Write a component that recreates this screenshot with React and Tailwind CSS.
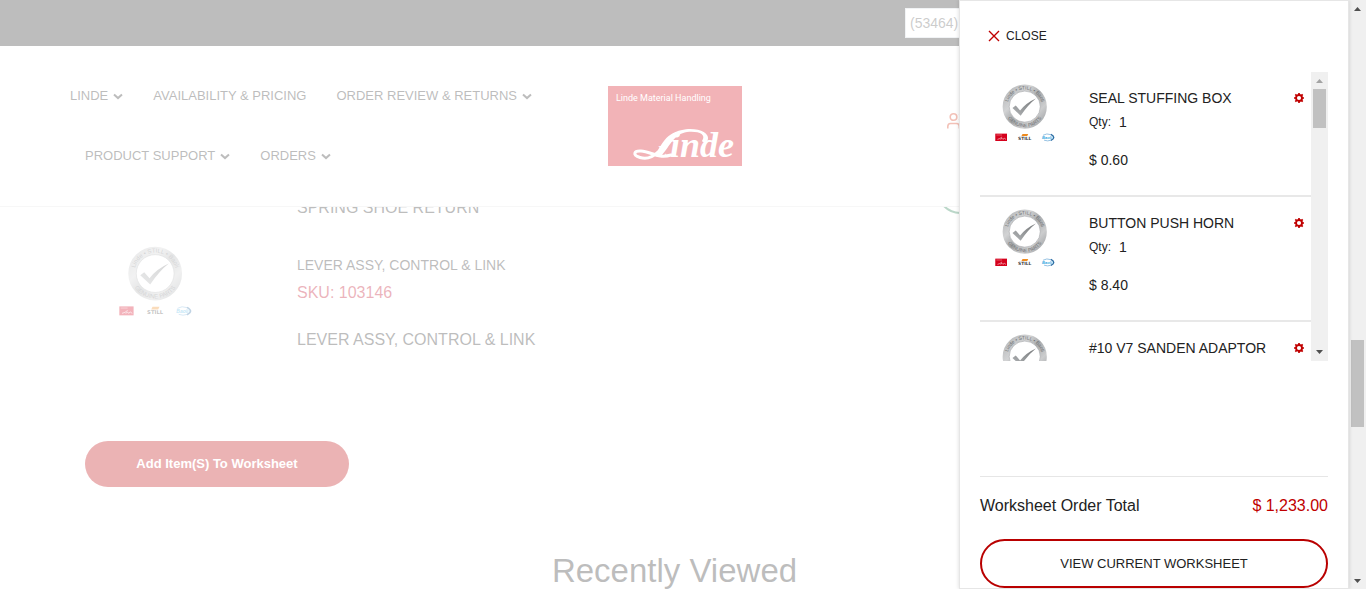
import React from 'react';

function Chevron() {
  return (
    <svg className="h-2 w-2.5" viewBox="0 0 10 8" fill="none" stroke="currentColor" strokeWidth="2" aria-hidden="true">
      <path d="M1 2.500 L5 6.100 L9 2.500" />
    </svg>
  );
}

function GenuineBadge({ id, className }) {
  return (
    <svg className={className} viewBox="56 34 220 212" role="img" aria-label="Genuine parts">
      <defs>
        <linearGradient id={`${id}-ring`} x1="0" y1="0" x2="1" y2="1">
          <stop offset="0" stopColor="#b4b6b8" />
          <stop offset="0.3" stopColor="#d2d3d4" />
          <stop offset="0.5" stopColor="#a9abad" />
          <stop offset="0.75" stopColor="#cccdce" />
          <stop offset="1" stopColor="#a0a2a5" />
        </linearGradient>
        <linearGradient id={`${id}-tick`} x1="0" y1="1" x2="1" y2="0">
          <stop offset="0" stopColor="#b0b3b5" />
          <stop offset="1" stopColor="#77797b" />
        </linearGradient>
        <path id={`${id}-top`} d="M102 117 A63 63 0 0 1 228 117" />
        <path id={`${id}-bottom`} d="M90 117 A75 75 0 0 0 240 117" />
      </defs>
      <circle cx="165" cy="117" r="69" fill="none" stroke={`url(#${id}-ring)`} strokeWidth="24" />
      <circle cx="165" cy="117" r="57" fill="none" stroke="#9a9c9e" strokeWidth="2" />
      <g fill="#6f7173" fontFamily="Liberation Sans, sans-serif" fontSize="18" textAnchor="middle">
        <text><textPath href={`#${id}-top`} startOffset="50%">Linde • STILL • Baoli</textPath></text>
        <text><textPath href={`#${id}-bottom`} startOffset="50%">GENUINE PARTS</textPath></text>
      </g>
      <path d="M120 122 L132 113 L148 131 Q170 103 206 87 Q178 109 150 150 Z" fill={`url(#${id}-tick)`} />
      <rect x="57" y="216" width="43" height="27" fill="#d5001c" />
      <path d="M61 221 H82" stroke="#f3a0a8" strokeWidth="2" />
      <path d="M65 237 L74 234 L82 228 M76 237 L82 233 L85 237 L90 233 L96 237" fill="none" stroke="#fff" strokeWidth="2" />
      <path d="M157 217 H178 L174 225 H153 Z" fill="#ef8a1d" />
      <text x="165" y="238" fill="#3c3c3c" fontFamily="DejaVu Sans, sans-serif" fontSize="16" fontWeight="700" textAnchor="middle">STILL</text>
      <path d="M232 222 A22 12 0 0 1 262 220 M236 240 A22 12 0 0 0 262 240" fill="none" stroke="#7fb4dc" strokeWidth="3" />
      <path d="M261 219 Q282 230 261 241" fill="none" stroke="#2e6da4" strokeWidth="5" />
      <text x="247" y="236" fill="#36a9e1" fontFamily="Liberation Sans, sans-serif" fontSize="15" fontStyle="italic" fontWeight="700" textAnchor="middle">Baoli</text>
    </svg>
  );
}

function Logo() {
  return (
    <svg className="h-20 w-[134px]" viewBox="0 0 134 80" role="img" aria-label="Linde Material Handling">
      <rect width="134" height="80" fill="#d4000f" />
      <text x="8" y="15" fill="#fff" fontFamily="Roboto, sans-serif" fontSize="9">Linde Material Handling</text>
      <text y="71" fill="#fff" fontFamily="Liberation Serif, serif" fontStyle="italic" fontWeight="700">
        <tspan x="49" fontSize="16">L</tspan>
        <tspan x="62" fontSize="36">inde</tspan>
      </text>
      <path d="M46 70 C54 60 56 46 78 43.200 C92 42 101 47 100 53 C99 57 95 57 94 55 C99 48 90 44.800 79 46 C66 48 62 60 54 69 Z" fill="#fff" />
      <path d="M50 66 C44 72 37 73 32 71.500 C24 69 26 64.500 33 65 C43 65.500 50 73 63 69" fill="none" stroke="#fff" strokeWidth="3" strokeLinecap="round" />
    </svg>
  );
}

function Gear() {
  return (
    <svg className="size-2.5" viewBox="0 0 10 10" fill="none" stroke="#c00000" aria-hidden="true">
      <path d="M5 0 V2 M5 8 V10 M0 5 H2 M8 5 H10 M1.3 1.3 L2.8 2.8 M7.2 7.2 L8.7 8.7 M8.7 1.3 L7.2 2.8 M2.8 7.2 L1.3 8.7" strokeWidth="1.7" />
      <circle cx="5" cy="5" r="3" strokeWidth="1.900" />
    </svg>
  );
}

function Arrow({ up, className }) {
  return (
    <svg className={className} viewBox="0 0 7 4" fill="currentColor" aria-hidden="true">
      <path d={up ? 'M0 4 L3.5 0 L7 4 Z' : 'M0 0 L3.5 4 L7 0 Z'} />
    </svg>
  );
}

const nav = [
  { label: 'LINDE', menu: true },
  { label: 'AVAILABILITY & PRICING' },
  { label: 'ORDER REVIEW & RETURNS', menu: true },
  { label: 'PRODUCT SUPPORT', menu: true },
  { label: 'ORDERS', menu: true },
];

const items = [
  { name: 'SEAL STUFFING BOX', price: '$ 0.60' },
  { name: 'BUTTON PUSH HORN', price: '$ 8.40' },
  { name: '#10 V7 SANDEN ADAPTOR' },
];

function Page() {
  return (
    <div className="relative min-w-0 flex-1 overflow-hidden bg-white">
      <div className="flex h-[46px] items-center justify-end bg-[#222]">
        <input
          aria-label="Account"
          defaultValue="(53464)"
          className="mr-[124px] h-[30px] w-80 border border-gray-300 bg-white px-1 text-sm text-[#555]"
        />
      </div>

      <header className="relative z-10 grid h-[161px] grid-cols-[1fr_134px_1fr] items-center border-b border-[#e5e5e5] bg-white">
        <nav className="flex flex-wrap pb-px pl-[70px]">
          {nav.map((n, i) => (
            <a
              key={n.label}
              href="#"
              className={`flex h-[60px] items-center gap-[5px] pr-[15px] text-[13px] ${i === 0 ? '' : 'pl-[15px]'}`}
            >
              {n.label}
              {n.menu && <Chevron />}
            </a>
          ))}
        </nav>
        <a href="#"><Logo /></a>
        <div className="flex justify-center pr-44 pb-2.5">
          <a href="#" aria-label="Account" className="text-[#d5300f]">
            <svg className="size-5" viewBox="0 0 20 20" fill="none" stroke="currentColor" strokeWidth="1.6">
              <circle cx="6.500" cy="6" r="3.300" />
              <path d="M0.800 17.500 V15.500 Q0.800 12.500 3.500 12.500 H9.500 Q12.300 12.500 12.300 15.500 V17.500 M12 3 Q14.500 4 14.500 6 T12 9.300 M15 12.500 Q18 13.500 18 17.500" />
            </svg>
          </a>
        </div>
      </header>

      <main className="-mt-[11px] px-[85px]">
        <div className="relative flex h-6 items-center pl-[212px]">
          <p className="leading-6">SPRING SHOE RETURN</p>
          <svg className="absolute -top-7 right-[281px] size-[46px]" viewBox="0 0 46 46" fill="none" stroke="#1c7a4b" strokeWidth="2" aria-hidden="true">
            <circle cx="23" cy="23" r="22" />
          </svg>
        </div>
        <article className="mt-[26px] flex">
          <div className="w-[212px] shrink-0 pl-[34px]">
            <GenuineBadge id="page" className="w-[73px]" />
          </div>
          <div className="pt-[7px]">
            <a href="#" className="block text-sm leading-6">LEVER ASSY, CONTROL &amp; LINK</a>
            <p className="mt-1 leading-6 text-[#bd0020]">SKU: 103146</p>
            <p className="mt-[23px] leading-6">LEVER ASSY, CONTROL &amp; LINK</p>
          </div>
        </article>
        <button type="button" className="mt-[89px] flex h-[46px] w-[264px] items-center justify-center rounded-full bg-[#bd0005] text-[13px] font-bold text-white">
          Add Item(S) To Worksheet
        </button>
        <h2 className="mt-[68px] text-center text-[33px] leading-8">Recently Viewed</h2>
      </main>

      <div className="absolute inset-0 z-20 bg-white/70" />
    </div>
  );
}

function WorksheetDrawer() {
  return (
    <aside className="absolute inset-y-0 right-[17px] z-30 flex w-[390px] flex-col border border-[#e6e6e6] bg-white px-5 text-[#222] shadow-[0_0_4px_rgba(0,0,0,0.15)]">
      <button type="button" className="mt-[27px] ml-2 flex h-4 w-fit items-center gap-1.5 text-xs">
        <svg className="size-3" viewBox="0 0 12 12" stroke="#c00000" strokeWidth="1.4" aria-hidden="true">
          <path d="M1 1 L11 11 M11 1 L1 11" />
        </svg>
        CLOSE
      </button>

      <div className="mt-7 flex h-[49vh] shrink-0">
        <ul className="min-w-0 flex-1 overflow-hidden">
          {items.map((item, i) => (
            <li key={item.name} className="flex h-[125px] border-b-2 border-[#e8e8e8] pt-3">
              <div className="w-[109px] shrink-0 pl-[15px]">
                <GenuineBadge id={`item-${i}`} className="w-[60px]" />
              </div>
              <div className="min-w-0 flex-1 pt-1">
                <h3 className="text-sm leading-5">{item.name}</h3>
                {item.price && (
                  <>
                    <p className="mt-1 flex items-center gap-2 leading-5">
                      <span className="text-xs">Qty:</span>
                      <span className="text-sm leading-5">1</span>
                    </p>
                    <p className="mt-[18px] text-sm leading-5">{item.price}</p>
                  </>
                )}
              </div>
              <button type="button" aria-label={`Options for ${item.name}`} className="mt-[9px] mr-[7px] size-2.5">
                <Gear />
              </button>
            </li>
          ))}
        </ul>
        <div className="flex w-[17px] flex-col items-center justify-between bg-[#f0f0f0] text-[#505050]">
          <div className="flex flex-col items-center">
            <span className="flex h-[17px] items-center text-[#a3a3a3]"><Arrow up className="h-1 w-[7px]" /></span>
            <span className="h-[39px] w-[13px] bg-[#c1c1c1]" />
          </div>
          <span className="flex h-[17px] items-center"><Arrow className="h-1 w-[7px]" /></span>
        </div>
      </div>

      <div className="mt-auto border-t border-[#e6e6e6] pt-[17px]">
        <div className="flex justify-between leading-6">
          <span>Worksheet Order Total</span>
          <span className="text-[#c00000]">$ 1,233.00</span>
        </div>
        <button type="button" className="mt-[21px] h-[49px] w-full rounded-full border-2 border-[#b90000] text-[13px]">
          VIEW CURRENT WORKSHEET
        </button>
      </div>
    </aside>
  );
}

export default function App() {
  return (
    <div className="relative flex h-screen overflow-hidden font-['Liberation_Sans',Arial,sans-serif] text-base text-[#222]">
      <Page />
      <WorksheetDrawer />
      <div className="flex w-[17px] shrink-0 flex-col items-center bg-[#f0f0f0] text-[#505050]">
        <span className="flex h-[17px] items-center"><Arrow up className="h-1 w-[7px]" /></span>
        <div className="flex w-full flex-1 flex-col items-center">
          <span className="basis-[58.2%]" />
          <span className="h-[87px] w-[13px] bg-[#c1c1c1]" />
        </div>
        <span className="flex h-[17px] items-center"><Arrow className="h-1 w-[7px]" /></span>
      </div>
    </div>
  );
}
